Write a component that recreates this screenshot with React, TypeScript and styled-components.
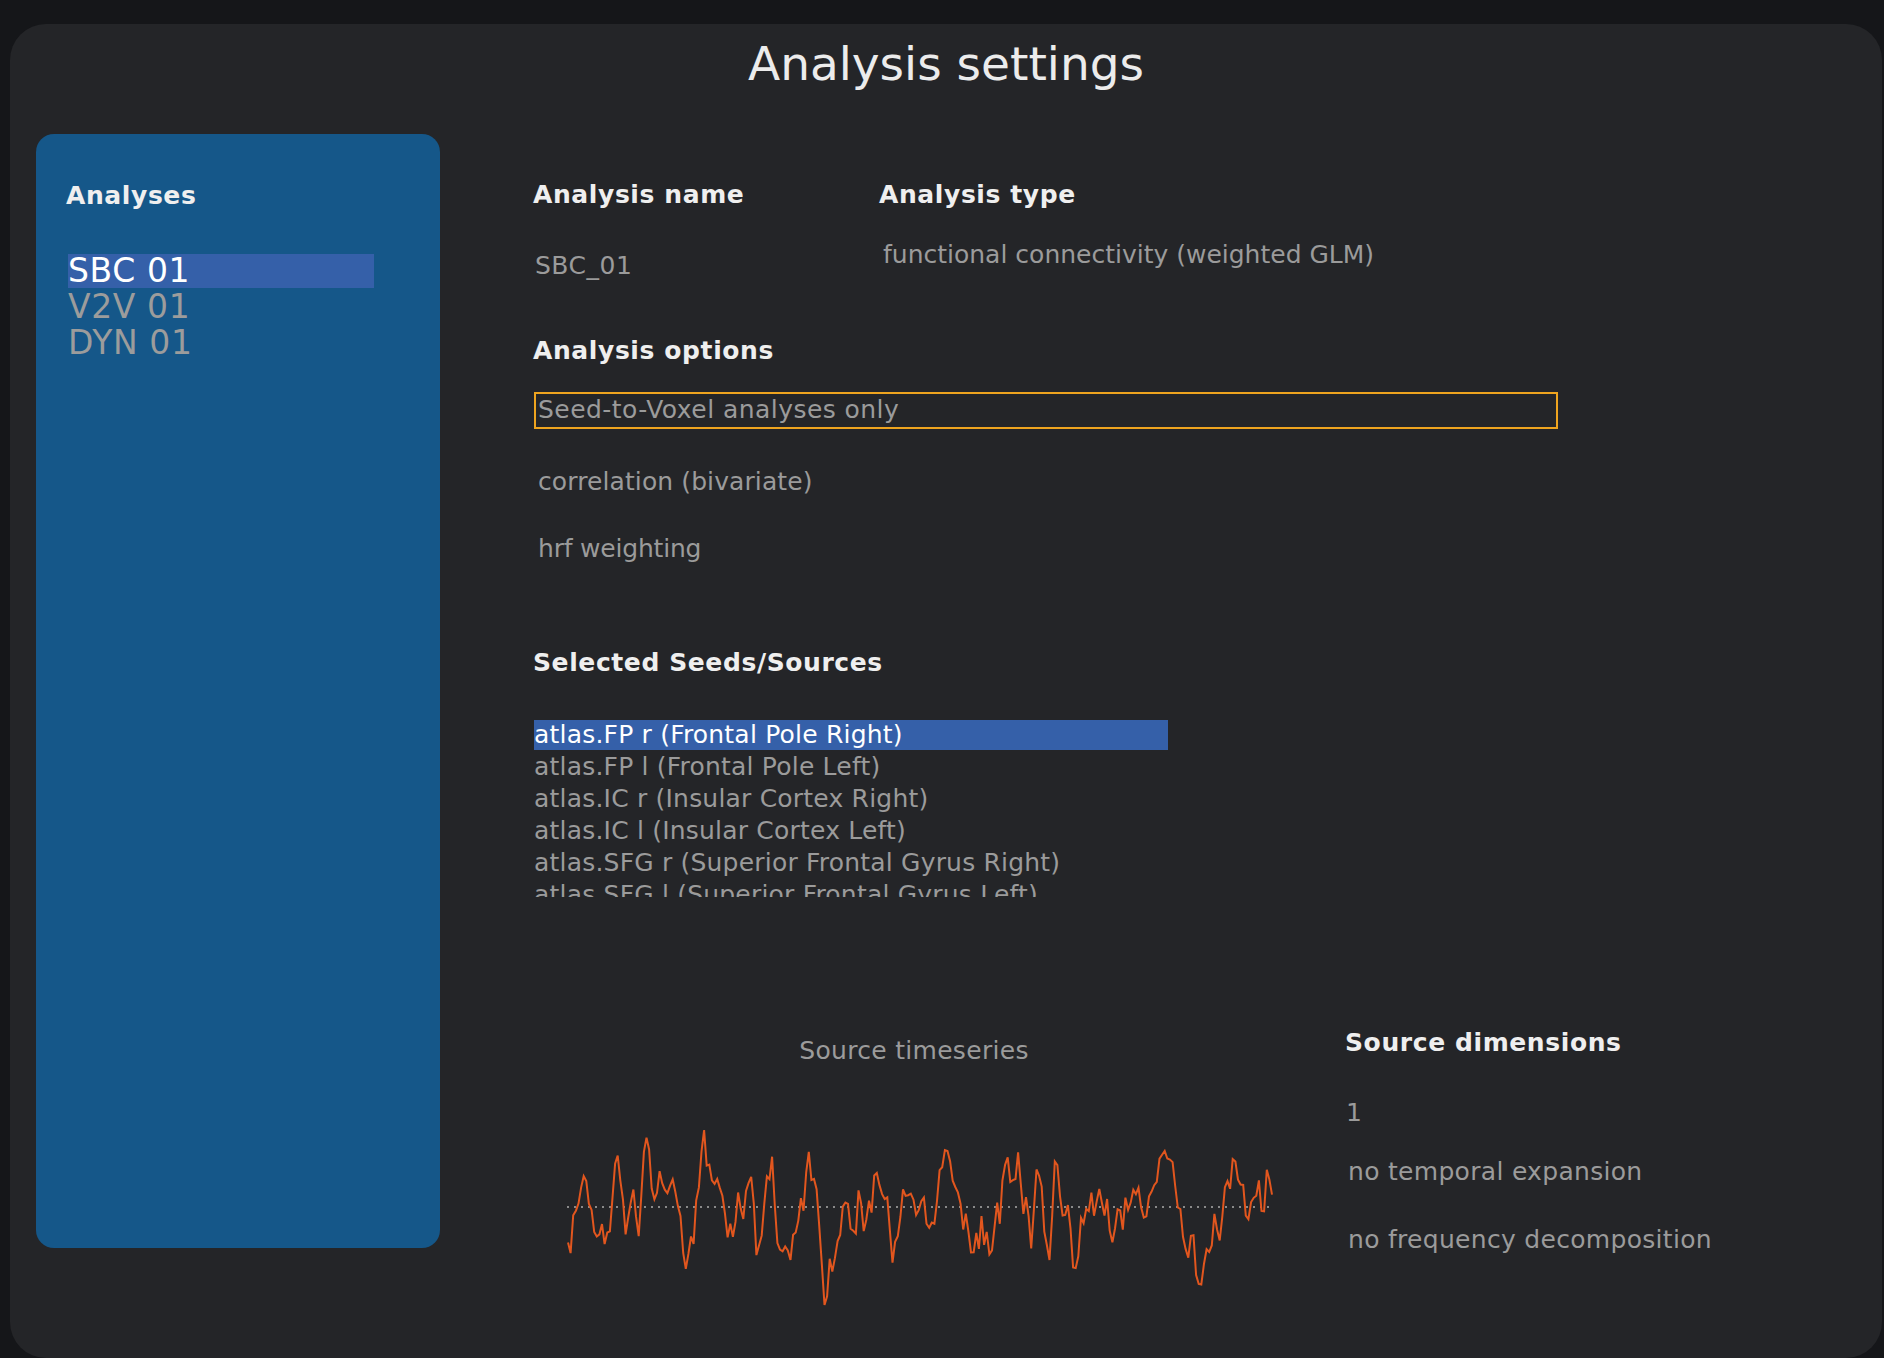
import React from "react";
import styled, { createGlobalStyle } from "styled-components";

const GlobalStyle = createGlobalStyle`
  html, body {
    margin: 0;
    padding: 0;
    background: #151619;
    overflow: hidden;
  }
  body {
    font-family: "DejaVu Sans", Verdana, sans-serif;
  }
`;

const Window = styled.div`
  margin: 24px 2px 0 10px;
  height: 1334px;
  box-sizing: border-box;
  padding-top: 12px;
  background: #242528;
  border-radius: 36px;
  display: flex;
  flex-direction: column;
`;

const Title = styled.h1`
  margin: 0;
  font-weight: normal;
  font-size: 47px;
  line-height: 56px;
  color: #ececec;
  text-align: center;
`;

const Body = styled.div`
  display: flex;
  align-items: flex-start;
  margin-top: 42px;
  padding-left: 26px;
`;

const Sidebar = styled.aside`
  width: 404px;
  height: 1114px;
  box-sizing: border-box;
  padding: 47px 0 0 30px;
  background: #155789;
  border-radius: 18px;
  flex-shrink: 0;
`;

const Heading = styled.div`
  font-weight: bold;
  font-size: 25px;
  line-height: 30px;
  letter-spacing: 0.6px;
  color: #efefef;
  white-space: nowrap;
`;

const AnalysisList = styled.div`
  margin: 43px 0 0 2px;
  width: 306px;
`;

const AnalysisItem = styled.div<{ $selected?: boolean }>`
  font-size: 33px;
  line-height: 34px;
  letter-spacing: 0.6px;
  padding-bottom: 2px;
  background-clip: content-box;
  background-color: ${(p) => (p.$selected ? "#3560a9" : "transparent")};
  color: ${(p) => (p.$selected ? "#ffffff" : "#9c9c9c")};
  white-space: nowrap;
`;

const Main = styled.main`
  margin-left: 93px;
  display: flex;
  flex-direction: column;
  width: 1240px;
`;

const FieldRow = styled.div`
  display: grid;
  grid-template-columns: 346px auto;
  margin-top: 46px;
`;

const Field = styled.div`
  display: flex;
  flex-direction: column;
`;

const Text = styled.div<{ $gap?: number; $indent?: number; $spacing?: number }>`
  font-size: 25px;
  line-height: 30px;
  color: #9b9b9b;
  white-space: nowrap;
  letter-spacing: ${(p) => p.$spacing ?? 0}px;
  margin-top: ${(p) => p.$gap ?? 0}px;
  padding-left: ${(p) => p.$indent ?? 0}px;
`;

const SectionHeading = styled(Heading)<{ $gap: number }>`
  margin-top: ${(p) => p.$gap}px;
`;

const FocusBox = styled.div`
  margin-top: 26px;
  margin-left: 1px;
  width: 1024px;
  height: 37px;
  box-sizing: border-box;
  border: 2px solid #eea41f;
  padding: 1px 0 0 2px;
  font-size: 25px;
  line-height: 30px;
  letter-spacing: 0.45px;
  color: #9b9b9b;
`;

const SeedList = styled.div`
  margin: 42px 0 0 1px;
  width: 634px;
  height: 177px;
  overflow: hidden;
`;

const SeedItem = styled.div<{ $selected?: boolean }>`
  font-size: 25px;
  line-height: 30px;
  letter-spacing: 0.2px;
  padding-bottom: 2px;
  background-clip: content-box;
  background-color: ${(p) => (p.$selected ? "#3560a9" : "transparent")};
  color: ${(p) => (p.$selected ? "#ffffff" : "#9b9b9b")};
  white-space: nowrap;
`;

const BottomRow = styled.div`
  display: flex;
  align-items: flex-start;
  margin-top: 131px;
`;

const TimeseriesBlock = styled.div`
  width: 762px;
  padding-top: 8px;
  display: flex;
  flex-direction: column;
`;

const ChartTitle = styled.div`
  font-size: 25px;
  line-height: 30px;
  letter-spacing: 0.3px;
  color: #9b9b9b;
  text-align: center;
`;

const ChartSvg = styled.svg`
  display: block;
  margin: 62px 0 0 34px;
`;

const DimensionsBlock = styled.div`
  margin-left: 50px;
  display: flex;
  flex-direction: column;
`;

const seeds = [
  "atlas.FP r (Frontal Pole Right)",
  "atlas.FP l (Frontal Pole Left)",
  "atlas.IC r (Insular Cortex Right)",
  "atlas.IC l (Insular Cortex Left)",
  "atlas.SFG r (Superior Frontal Gyrus Right)",
  "atlas.SFG l (Superior Frontal Gyrus Left)",
  "atlas.MidFG r (Middle Frontal Gyrus Right)",
  "atlas.MidFG l (Middle Frontal Gyrus Left)",
];

const W = 706;
const H = 180;
const BASE = 79;

function makeWave(n: number): string {
  let s = 20240611;
  const rand = () => {
    s = (Math.imul(s, 1664525) + 1013904223) >>> 0;
    return s / 4294967296;
  };
  const out: number[] = [];
  let a1 = 0;
  let a2 = 0;
  let slow = 0;
  for (let i = 0; i < n + 40; i++) {
    const x = rand() - 0.5 + (rand() - 0.5);
    a1 = a1 * 0.6 + x * 0.4;
    a2 = a2 * 0.5 + a1 * 0.5;
    slow = slow * 0.92 + a2 * 0.08;
    if (i >= 40) out.push(a2 - slow * 0.7);
  }
  const max = Math.max(...out);
  const min = Math.min(...out);
  const pts = out.map((v, i) => {
    const y = v >= 0 ? BASE - (v / max) * 77 : BASE + (v / min) * 98;
    const x = 1 + (i * (W - 2)) / (n - 1);
    return `${x.toFixed(1)},${y.toFixed(1)}`;
  });
  return pts.join(" ");
}

const wave = makeWave(270);

export default function App() {
  return (
    <>
      <GlobalStyle />
      <Window>
        <Title>Analysis settings</Title>
        <Body>
          <Sidebar>
            <Heading>Analyses</Heading>
            <AnalysisList>
              <AnalysisItem $selected>SBC 01</AnalysisItem>
              <AnalysisItem>V2V 01</AnalysisItem>
              <AnalysisItem>DYN 01</AnalysisItem>
            </AnalysisList>
          </Sidebar>
          <Main>
            <FieldRow>
              <Field>
                <Heading>Analysis name</Heading>
                <Text $gap={41} $indent={2} $spacing={0.5}>
                  SBC_01
                </Text>
              </Field>
              <Field>
                <Heading>Analysis type</Heading>
                <Text $gap={30} $indent={4}>
                  functional connectivity (weighted GLM)
                </Text>
              </Field>
            </FieldRow>

            <SectionHeading $gap={55}>Analysis options</SectionHeading>
            <FocusBox>Seed-to-Voxel analyses only</FocusBox>
            <Text $gap={38} $indent={5} $spacing={0.1}>
              correlation (bivariate)
            </Text>
            <Text $gap={37} $indent={5} $spacing={-0.2}>
              hrf weighting
            </Text>

            <SectionHeading $gap={84}>Selected Seeds/Sources</SectionHeading>
            <SeedList>
              {seeds.map((s, i) => (
                <SeedItem key={s} $selected={i === 0}>
                  {s}
                </SeedItem>
              ))}
            </SeedList>

            <BottomRow>
              <TimeseriesBlock>
                <ChartTitle>Source timeseries</ChartTitle>
                <ChartSvg width={W} height={H} viewBox={`0 0 ${W} ${H}`}>
                  <line
                    x1={0}
                    y1={BASE}
                    x2={W}
                    y2={BASE}
                    stroke="#8a8a8a"
                    strokeWidth={2}
                    strokeDasharray="2 5"
                  />
                  <polyline
                    points={wave}
                    fill="none"
                    stroke="#e2561e"
                    strokeWidth={2}
                    strokeLinejoin="miter"
                  />
                </ChartSvg>
              </TimeseriesBlock>
              <DimensionsBlock>
                <Heading>Source dimensions</Heading>
                <Text $gap={40} $indent={1}>
                  1
                </Text>
                <Text $gap={29} $indent={3} $spacing={0.3}>
                  no temporal expansion
                </Text>
                <Text $gap={38} $indent={3} $spacing={0.3}>
                  no frequency decomposition
                </Text>
              </DimensionsBlock>
            </BottomRow>
          </Main>
        </Body>
      </Window>
    </>
  );
}
